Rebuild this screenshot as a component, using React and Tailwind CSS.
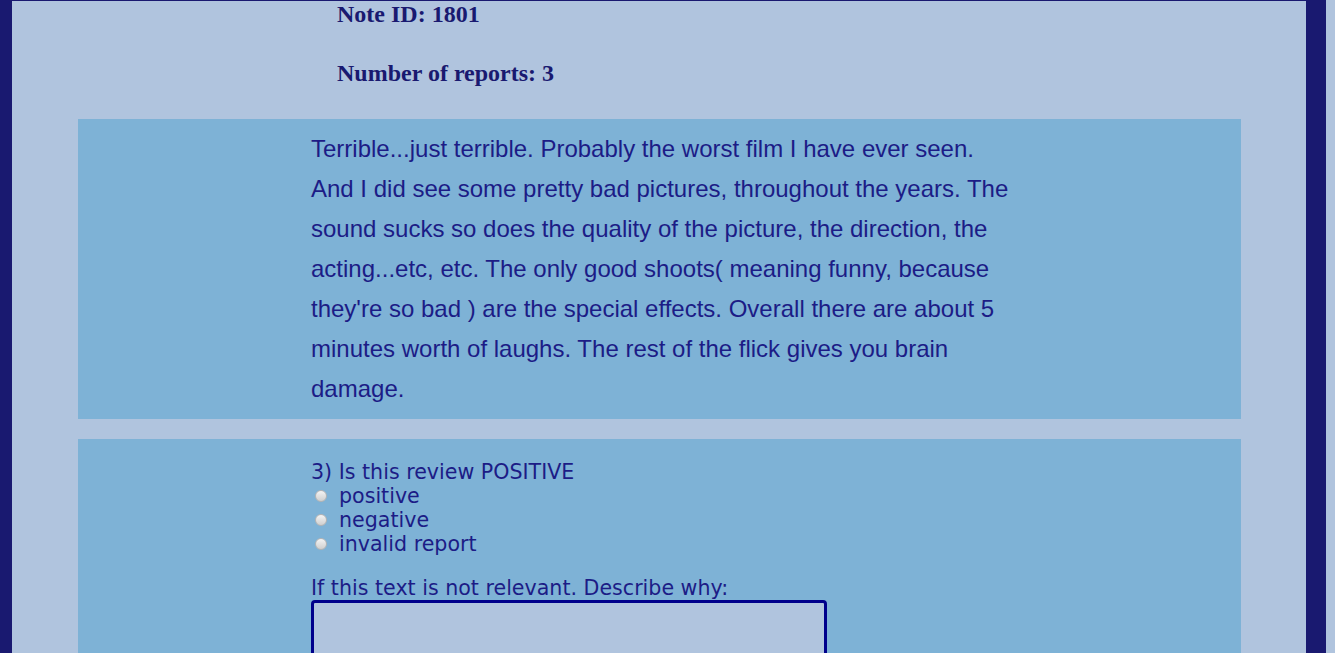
import React from "react";

const review =
  "Terrible...just terrible. Probably the worst film I have ever seen. And I did see some pretty bad pictures, throughout the years. The sound sucks so does the quality of the picture, the direction, the acting...etc, etc. The only good shoots( meaning funny, because they're so bad ) are the special effects. Overall there are about 5 minutes worth of laughs. The rest of the flick gives you brain damage.";

const options = ["positive", "negative", "invalid report"];

const Radio = () => (
  <span className="inline-block w-[12px] h-[12px] rounded-full border border-[#b4b4b4] bg-gradient-to-b from-[#f4f4f4] to-[#cfcfcf] mr-[12px] ml-[4px] shrink-0" />
);

export default function App() {
  return (
    <div className="h-[653px] overflow-hidden bg-[#b0c4de] flex">
      <div className="w-[12px] bg-[#191970] shrink-0" />
      <div className="w-[1294px] shrink-0 border-t border-[#191970] text-[#191970]">
        <div
          className="pl-[325px] font-bold text-[24px] leading-[28px]"
          style={{ fontFamily: '"Liberation Serif", serif' }}
        >
          <h2 className="-mt-[1px]">Note ID: 1801</h2>
          <h2 className="mt-[31px]">Number of reports: 3</h2>
        </div>

        <div className="ml-[66px] mr-[65px] mt-[32px] bg-[#7eb2d6] pl-[233px] py-[10px]">
          <p
            className="w-[700px] text-[24px] leading-[40px] text-[#1c1c86]"
            style={{ fontFamily: '"Liberation Sans", Arial, sans-serif' }}
          >
            {review}
          </p>
        </div>

        <div
          className="ml-[66px] mr-[65px] mt-[20px] bg-[#7eb2d6] pl-[233px] pt-[21px] h-[300px] text-[20.6px] leading-[24px] text-[#1c1c86]"
          style={{ fontFamily: '"DejaVu Sans", Verdana, sans-serif' }}
        >
          <div>3) Is this review POSITIVE</div>
          {options.map((o) => (
            <label key={o} className="flex items-center">
              <Radio />
              {o}
            </label>
          ))}
          <div className="mt-[20px]">If this text is not relevant. Describe why:</div>
          <textarea className="block w-[516px] h-[100px] border-[3px] border-[#00008b] rounded-[4px] bg-[#b0c4de] outline-none resize-none" />
        </div>
      </div>
      <div className="w-[20px] bg-[#191970] shrink-0" />
      <div className="flex-1" />
    </div>
  );
}
